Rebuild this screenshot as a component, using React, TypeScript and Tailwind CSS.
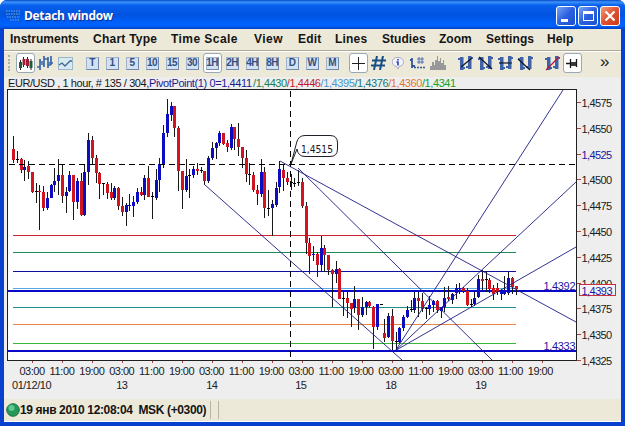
import React from 'react';

// open-high-low-close in chart pixels: [wick top, wick bottom, body top, body bottom, direction]
type Candle = [number, number, number, number, 'u' | 'd' | 'n'];

const candles: Candle[] = [
  [136, 163, 149, 160, 'd'], [151, 163, 159, 160, 'n'], [158, 173, 159, 170, 'd'], [160, 181, 167, 170, 'u'],
  [161, 179, 166, 172, 'd'], [172, 193, 172, 192, 'd'], [183, 203, 191, 192, 'n'], [185, 230, 191, 192, 'd'],
  [186, 211, 192, 208, 'd'], [192, 210, 198, 208, 'u'], [184, 198, 185, 198, 'u'], [168, 192, 181, 185, 'u'],
  [159, 195, 175, 181, 'u'], [165, 203, 175, 196, 'd'], [187, 213, 192, 196, 'u'], [171, 192, 175, 191, 'u'],
  [175, 220, 175, 202, 'd'], [178, 209, 181, 202, 'u'], [173, 216, 181, 215, 'd'], [165, 216, 172, 215, 'u'],
  [133, 185, 140, 172, 'u'], [136, 165, 140, 158, 'd'], [155, 183, 158, 173, 'd'], [172, 199, 173, 184, 'd'],
  [184, 195, 183, 184, 'n'], [182, 199, 184, 193, 'd'], [183, 200, 192, 198, 'd'], [186, 200, 188, 198, 'u'],
  [187, 210, 188, 206, 'd'], [197, 216, 206, 212, 'd'], [203, 226, 205, 212, 'u'], [194, 211, 205, 206, 'u'],
  [196, 217, 202, 206, 'u'], [188, 204, 192, 202, 'u'], [187, 196, 192, 195, 'd'], [175, 200, 178, 195, 'u'],
  [166, 197, 178, 197, 'd'], [192, 219, 196, 197, 'n'], [169, 200, 180, 198, 'u'], [158, 192, 164, 180, 'u'],
  [125, 168, 133, 164, 'u'], [99, 137, 114, 133, 'u'], [102, 121, 106, 115, 'u'], [106, 137, 106, 128, 'd'],
  [126, 191, 128, 171, 'd'], [171, 209, 171, 190, 'd'], [159, 192, 176, 190, 'u'], [169, 198, 175, 176, 'n'],
  [166, 178, 169, 175, 'u'], [163, 175, 169, 171, 'd'], [167, 173, 170, 171, 'n'], [171, 185, 171, 181, 'd'],
  [156, 183, 158, 181, 'u'], [142, 160, 148, 158, 'u'], [142, 159, 143, 148, 'u'], [131, 146, 133, 143, 'u'],
  [133, 145, 133, 144, 'd'], [140, 152, 143, 147, 'd'], [124, 150, 127, 148, 'u'], [127, 150, 127, 139, 'd'],
  [123, 156, 139, 147, 'd'], [147, 168, 147, 158, 'd'], [150, 182, 158, 174, 'd'], [163, 185, 174, 175, 'n'],
  [172, 192, 175, 190, 'd'], [185, 205, 190, 194, 'd'], [159, 197, 172, 194, 'u'], [167, 218, 172, 208, 'd'],
  [190, 216, 208, 209, 'n'], [200, 236, 204, 208, 'u'], [182, 207, 188, 205, 'u'], [161, 193, 169, 187, 'u'],
  [165, 191, 170, 178, 'd'], [172, 185, 178, 182, 'd'], [174, 190, 182, 183, 'n'], [178, 187, 183, 184, 'n'],
  [170, 186, 182, 183, 'n'], [178, 208, 182, 206, 'd'], [202, 254, 206, 243, 'd'], [238, 274, 243, 256, 'd'],
  [246, 261, 254, 255, 'u'], [252, 277, 254, 265, 'd'], [236, 272, 248, 265, 'u'], [245, 272, 248, 255, 'd'],
  [255, 275, 255, 270, 'd'], [269, 307, 270, 274, 'd'], [261, 283, 269, 274, 'u'], [268, 299, 269, 299, 'd'],
  [291, 316, 298, 299, 'n'], [291, 318, 298, 303, 'd'], [303, 327, 303, 309, 'd'], [286, 313, 299, 308, 'u'],
  [299, 330, 299, 315, 'd'], [297, 317, 307, 315, 'u'], [301, 315, 302, 307, 'u'], [301, 308, 302, 306, 'd'],
  [306, 349, 307, 327, 'd'], [304, 330, 304, 327, 'u'], [304, 305, 304, 305, 'n'], [319, 342, 333, 338, 'd'],
  [313, 338, 316, 337, 'u'], [309, 350, 316, 341, 'd'], [332, 350, 341, 342, 'n'], [327, 343, 328, 342, 'u'],
  [315, 331, 317, 328, 'u'], [306, 318, 310, 317, 'u'], [300, 312, 309, 310, 'n'], [292, 313, 298, 310, 'u'],
  [292, 317, 298, 301, 'd'], [293, 312, 301, 309, 'd'], [307, 319, 308, 309, 'n'], [296, 315, 305, 309, 'u'],
  [300, 312, 301, 305, 'u'], [300, 313, 301, 310, 'd'], [307, 318, 307, 311, 'u'], [287, 312, 298, 307, 'u'],
  [286, 301, 297, 299, 'd'], [293, 304, 294, 300, 'u'], [284, 299, 288, 293, 'u'], [283, 294, 288, 289, 'u'],
  [287, 293, 288, 291, 'd'], [288, 306, 291, 305, 'd'], [299, 307, 304, 305, 'n'], [292, 306, 298, 304, 'u'],
  [275, 298, 279, 297, 'u'], [270, 290, 279, 281, 'd'], [271, 292, 279, 280, 'n'], [278, 293, 280, 289, 'd'],
  [285, 300, 288, 294, 'd'], [283, 295, 288, 292, 'd'], [289, 300, 292, 294, 'u'], [276, 295, 290, 294, 'u'],
  [272, 295, 278, 293, 'u'], [277, 294, 278, 287, 'd'], [286, 295, 286, 289, 'd'],
];

const bodyColor = { u: '#0c0cc0', d: '#d01420', n: '#000000' };

const pivots = [
  { y: 235, color: '#d02034' },
  { y: 252, color: '#1c8c54' },
  { y: 271, color: '#1010a0' },
  { y: 288, color: '#58a8e4' },
  { y: 307, color: '#1c8c8c' },
  { y: 324, color: '#e88444' },
  { y: 343, color: '#38b838' },
];

const trends = [
  [205, 185, 402, 360],
  [280, 161, 576, 322],
  [298, 168, 492, 360],
  [395.5, 350.5, 563, 90],
  [395.5, 350.5, 576, 182],
  [395.5, 350.5, 576, 247],
];

const prices = ['1,4575', '1,4550', '1,4525', '1,4500', '1,4475', '1,4450', '1,4425', '1,4400', '1,4375', '1,4350', '1,4325'];
const hours = ['03:00', '11:00', '19:00'];
const days = [
  { x: 122, label: '13' },
  { x: 212, label: '14' },
  { x: 301, label: '15' },
  { x: 391, label: '18' },
  { x: 481, label: '19' },
];

const menu = [
  { label: 'Instruments', cls: 'w-[83px] tracking-[0px]' },
  { label: 'Chart Type', cls: 'w-[78px] tracking-[0.25px]' },
  { label: 'Time Scale', cls: 'w-[83px] tracking-[0.45px]' },
  { label: 'View', cls: 'w-[44px] tracking-[0.5px]' },
  { label: 'Edit', cls: 'w-[37px] tracking-[0.2px]' },
  { label: 'Lines', cls: 'w-[47px] tracking-[0.2px]' },
  { label: 'Studies', cls: 'w-[57px] tracking-[0.05px]' },
  { label: 'Zoom', cls: 'w-[47px] tracking-[0px]' },
  { label: 'Settings', cls: 'w-[61px] tracking-[0.1px]' },
  { label: 'Help', cls: 'w-[30px] tracking-[0.1px]' },
];

const levels = [
  { label: '/1,4430', cls: 'text-[#168050]' },
  { label: '/1,4446', cls: 'text-[#c01830]' },
  { label: '/1,4395', cls: 'text-[#4a98cc]' },
  { label: '/1,4376', cls: 'text-[#187878]' },
  { label: '/1,4360', cls: 'text-[#e07830]' },
  { label: '/1,4341', cls: 'text-[#20a020]' },
];

const periods = ['T', '1', '5', '10', '15', '30', '1H', '2H', '4H', '8H', 'D', 'W', 'M'];

function Tool({ active, children }: { active?: boolean; children: React.ReactNode }) {
  return (
    <div className="w-5 h-5 flex items-center justify-center flex-none">
      <div
        className={
          active
            ? 'w-[19px] h-5 flex items-center justify-center bg-white border border-[#98a8b4] rounded-[3px]'
            : 'w-[19px] h-5 flex items-center justify-center'
        }
      >
        {children}
      </div>
    </div>
  );
}

function Period({ label }: { label: string }) {
  return (
    <span className="w-[13px] h-[13px] flex-none flex items-center justify-center bg-[#d3e2f2] border border-[#a3b5cd] border-r-[#7188aa] border-b-[#7188aa] text-[#334f7e] text-[10px] leading-none font-bold tracking-[-0.6px]">
      {label}
    </span>
  );
}

// two price bars with a zoom / scroll mark on top
function BarsIcon({ mark, color = '#101828' }: { mark: string; color?: string }) {
  return (
    <svg width="17" height="17" viewBox="0 0 17 17" className="flex-none">
      <path d="M3 2h3.500v13H3zM11 1h3.500v13H11z" fill="#3f62a8" />
      <path d="M1 4h2M6 13h2M9 12h2M14 3h2" stroke="#3f62a8" strokeWidth="2" />
      <path d={mark} stroke={color} strokeWidth="1.2" fill="none" />
    </svg>
  );
}

function Chart() {
  return (
    <svg width="617" height="310" viewBox="4 89 617 310" className="block flex-none" fontFamily="Liberation Sans, Arial, sans-serif" fontSize="11">
      <rect x="8" y="90" width="568" height="270" fill="#fff" />

      <g shapeRendering="crispEdges">
        {pivots.map((p) => (
          <rect key={p.y} x="13" y={p.y} width="503" height="1" fill={p.color} />
        ))}
        <rect x="8" y="290" width="568" height="2" fill="#0808c8" />
        <rect x="8" y="350" width="568" height="2" fill="#0808c8" />
        {candles.map(([hi, lo, top, bottom, dir], i) => {
          const x = Math.round(13 + i * 3.75);
          return (
            <g key={i}>
              <rect x={x} y={hi} width="1" height={lo - hi} fill="#181818" />
              <rect x={x - 1} y={top} width="3" height={bottom - top} fill={bodyColor[dir]} />
            </g>
          );
        })}
        <path d="M9 164.5H576" stroke="#000" strokeDasharray="6 4" />
        <path d="M290.5 91V360" stroke="#000" strokeDasharray="6 4" />
      </g>

      {trends.map(([x1, y1, x2, y2], i) => (
        <line key={i} x1={x1} y1={y1} x2={x2} y2={y2} stroke="#1c1c84" strokeWidth="0.9" />
      ))}

      {/* frame */}
      <path d="M7.5 360.5V89.5H576.5V360.5Z" fill="none" stroke="#202020" shapeRendering="crispEdges" />

      {/* price callout */}
      <path d="M291 164L296.500 143Q298 135.500 305 135.500H330Q337.500 135.500 337.500 143V149Q337.500 156.500 330 156.500H305Q298 156.500 297 149Z" fill="#fff" stroke="#202028" />
      <text x="301" y="152.500" textLength="32" lengthAdjust="spacingAndGlyphs" fontFamily="DejaVu Sans, sans-serif" fontSize="11" fill="#181820">1,4515</text>

      {/* price scale */}
      {prices.map((p, i) => {
        const y = Math.round(102 + i * 25.8);
        return (
          <g key={p}>
            <rect x="577" y={y} width="4" height="1" fill="#b04040" />
            <text x="581.500" y={y + 5} textLength="30.500" fill={p === '1,4525' ? '#1818a0' : '#202020'}>{p}</text>
          </g>
        );
      })}
      <rect x="579.500" y="284.500" width="36" height="11" fill="#f4f4f8" stroke="#c83040" />
      <text x="581.500" y="294.500" textLength="31" fill="#1818a0">1,4393</text>
      <text x="543.500" y="290" textLength="32" fill="#1818a0">1,4392</text>
      <text x="543.500" y="350" textLength="32" fill="#1818a0">1,4333</text>

      {/* time scale */}
      {Array.from({ length: 18 }, (_, i) => (
        <g key={i}>
          <rect x={32 + i * 30} y="361" width="1" height="2" fill="#b04040" />
          <text x={19.5 + i * 29.9} y="374.500" textLength="25.500" fill="#202020">{hours[i % 3]}</text>
        </g>
      ))}
      <text x="12" y="388.500" textLength="39.500" fill="#202020">01/12/10</text>
      {days.map((d) => (
        <text key={d.label} x={d.x} y="388.500" textAnchor="middle" textLength="11.500" fill="#202020">{d.label}</text>
      ))}
    </svg>
  );
}

export default function App() {
  return (
    <div className="w-[625px] h-[426px] bg-white overflow-hidden font-['Liberation_Sans',Arial,sans-serif]">
      <div className="w-full h-full flex flex-col rounded-t-[7px] overflow-hidden bg-[#0840d0]">
        {/* title bar */}
        <div className="h-[29px] flex-none flex items-center pl-[5px] pr-[5px] pt-[3px] bg-[linear-gradient(180deg,#0848c8_0%,#3c94fc_7%,#0860ec_18%,#0054e0_50%,#0060fa_78%,#0060fa_90%,#0040c0_100%)]">
          <svg width="16" height="16" viewBox="0 0 16 16" className="flex-none">
            <path d="M1 3h14M1 6h14M2 9h13M5 12h10" stroke="#4d8fd6" strokeWidth="1.5" strokeDasharray="1.500 1" />
            <path d="M1 4.500h9M4 7.500h11" stroke="#174497" strokeDasharray="1 1.500" />
          </svg>
          <span className="ml-[3px] flex-1 whitespace-nowrap text-white text-[12px] font-bold leading-none font-['Open_Sans',sans-serif] tracking-[-0.3px] [text-shadow:1px_1px_0_#0a2f90]">
            Detach window
          </span>
          <div className="flex gap-[2px]">
            <div className="w-5 h-5 rounded-[3px] border border-white bg-[linear-gradient(135deg,#7aa4f4,#2a60e0_50%,#1c50cc)] flex items-end pl-1 pb-[3px]">
              <span className="w-[7px] h-[3px] bg-white"></span>
            </div>
            <div className="w-5 h-5 rounded-[3px] border border-white bg-[linear-gradient(135deg,#7aa4f4,#2a60e0_50%,#1c50cc)] flex items-center justify-center">
              <span className="w-[11px] h-[10px] border border-t-[3px] border-white"></span>
            </div>
            <div className="w-5 h-5 rounded-[3px] border border-white bg-[linear-gradient(135deg,#f09c80,#e05030_50%,#c83c18)] flex items-center justify-center">
              <svg width="12" height="12" viewBox="0 0 12 12">
                <path d="M1.500 1.500l9 9M10.500 1.500l-9 9" stroke="#fff" strokeWidth="2.2" />
              </svg>
            </div>
          </div>
        </div>

        <div className="flex-1 min-h-0 mx-1 mb-1 flex flex-col bg-[#eeeeee] border-b border-white">
          {/* menu */}
          <div className="h-[22px] flex-none flex items-center pl-[6px] pb-[2px] bg-[#ece9d8] border-b border-[#aca899] text-[12px] font-bold text-[#141414] whitespace-nowrap leading-none">
            {menu.map((m) => (
              <span key={m.label} className={`${m.cls} flex-none`}>{m.label}</span>
            ))}
          </div>

          {/* toolbar */}
          <div className="h-[26px] flex-none flex items-center pl-1 pb-[3px] bg-[#ece9d8] border-t border-white">
            <div className="w-[7px] h-4 flex-none flex flex-col justify-between">
              {[0, 1, 2, 3, 4].map((n) => (
                <span key={n} className="w-[2px] h-[2px] bg-[#b4b0a0]"></span>
              ))}
            </div>
            <div className="flex">
              <Tool active>
                <svg width="15" height="15" viewBox="0 0 15 15">
                  <path d="M2.500 4v10M5.500 1v10M9.500 1v11M13 3v11" stroke="#222" />
                  <path d="M1 6h3v6H1z" fill="#1c5a38" />
                  <path d="M4.500 3h3v6h-3zM8 3h3v7H8z" fill="#a01c34" />
                  <path d="M11.500 5h3v7h-3z" fill="#1c5a38" />
                </svg>
              </Tool>
              <Tool>
                <svg width="16" height="16" viewBox="0 0 16 16" className="flex-none">
                  <path d="M3 4v11M0 12h3M3 7h3M7 1v11M4 9h3M7 4h3M11 2v11M8 4h3M11 10h3M14 1v9M12 8h4" stroke="#3a65aa" strokeWidth="1.700" />
                </svg>
              </Tool>
              <Tool>
                <svg width="15" height="13" viewBox="0 0 15 13">
                  <rect x="0.500" y="0.500" width="14" height="12" fill="#d9e9f2" stroke="#9ab8cc" />
                  <path d="M1 8l3-2 3 3 5-5h2" stroke="#42688e" strokeWidth="1.300" fill="none" />
                </svg>
              </Tool>
            </div>
            <div className="flex ml-[7px]">
              {periods.map((p) => (
                <Tool key={p} active={p === '1H'}>
                  <Period label={p} />
                </Tool>
              ))}
            </div>
            <div className="flex ml-[6px]">
              <Tool active>
                <svg width="13" height="13" viewBox="0 0 13 13">
                  <path d="M6.500 0v13M0 6.500h13" stroke="#202020" />
                </svg>
              </Tool>
              <Tool>
                <svg width="15" height="14" viewBox="0 0 15 14">
                  <path d="M6 0L3 14M12 0L9 14M1 4.500h14M0 9.500h14" stroke="#174d86" strokeWidth="2" />
                </svg>
              </Tool>
              <Tool>
                <svg width="12" height="13" viewBox="0 0 12 13">
                  <path d="M6 0.500a5 4.500 0 0 1 1 9L6 12 4.500 9.500A5 4.500 0 0 1 6 0.500z" fill="#f2f4fc" stroke="#a8acc4" />
                  <path d="M6 2v1.500M6 4.500v4M4.500 5H6" stroke="#3038b0" strokeWidth="1.600" />
                </svg>
              </Tool>
              <Tool>
                <svg width="16" height="15" viewBox="0 0 16 15" className="flex-none">
                  <path d="M2 2v10M0 4h2M2 10h3" stroke="#34569c" strokeWidth="1.800" />
                  <path d="M9 1v7M12 1v7M7 3h7M7 6h7" stroke="#5070b8" />
                  <path d="M4 11.500h12" stroke="#34569c" strokeWidth="1.500" strokeDasharray="2 1" />
                </svg>
              </Tool>
              <Tool>
                <svg width="16" height="14" viewBox="0 0 16 14" className="flex-none">
                  <path d="M0 14V10h2V6h2v3h1V4h2V0h1v5h2V2h1v5h2V4h1v5h2v5z" fill="#98989a" />
                </svg>
              </Tool>
            </div>
            <div className="flex ml-[7px]">
              <Tool><BarsIcon mark="M4 12L15 3" /></Tool>
              <Tool><BarsIcon mark="M2 2l13 12" /></Tool>
              <Tool><BarsIcon mark="M2 8h13" /></Tool>
              <Tool><BarsIcon mark="M1 4l12 11" /></Tool>
            </div>
            <div className="flex ml-[7px]">
              <Tool><BarsIcon mark="M2 15L15 2" color="#b01840" /></Tool>
              <Tool active>
                <svg width="12" height="11" viewBox="0 0 12 11">
                  <path d="M0 5.500h4M4.500 1v9M10.500 1v8" stroke="#181818" strokeWidth="1.300" />
                  <path d="M5 4h5v4H5z" fill="#383838" />
                </svg>
              </Tool>
            </div>
            <span className="ml-[18px] pb-1 text-[17px] leading-none text-[#202020]">»</span>
          </div>

          {/* quote line */}
          <div className="h-3 flex-none flex items-center pl-1 text-[11px] leading-none whitespace-nowrap">
            <span className="w-[141px] flex-none text-[#181818] tracking-[-0.42px]">EUR/USD , 1 hour, # 135 / 304,</span>
            <span className="w-[104px] flex-none text-[#1c1c90] tracking-[-0.4px]">PivotPoint(1) 0=1,4411</span>
            {levels.map((l) => (
              <span key={l.label} className={`${l.cls} w-[33.8px] flex-none tracking-[-0.42px]`}>{l.label}</span>
            ))}
          </div>

          <Chart />

          {/* status bar */}
          <div className="flex-1 min-h-0 flex items-center bg-[#ece9d8] pl-[2px]">
            <svg width="14" height="14" viewBox="0 0 14 14" className="flex-none">
              <circle cx="7" cy="7" r="6.300" fill="#249858" stroke="#207050" />
              <circle cx="5.500" cy="5" r="3" fill="#60c890" />
            </svg>
            <span className="w-[190px] flex-none text-[12px] font-bold text-[#141414] leading-none whitespace-pre tracking-[-0.36px]">19 янв 2010 12:08:04  MSK (+0300)</span>
            <span className="w-px h-[18px] bg-[#b8b4a4]"></span>
            <span className="w-px h-[18px] ml-[7px] bg-[#b8b4a4]"></span>
          </div>
        </div>
      </div>
    </div>
  );
}
